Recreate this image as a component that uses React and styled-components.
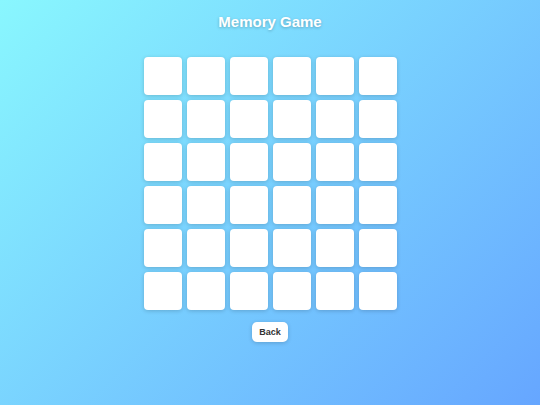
import React from "react";
import styled, { createGlobalStyle } from "styled-components";

const Global = createGlobalStyle`
  html, body { margin: 0; padding: 0; }
  body {
    font-family: "Liberation Sans", Arial, sans-serif;
    min-height: 405px;
    background: linear-gradient(135deg, #89f7fe 0%, #66a6ff 100%);
  }
`;

const Page = styled.div`
  width: 540px;
  height: 405px;
  display: flex;
  flex-direction: column;
  align-items: center;
  box-sizing: border-box;
  padding-top: 13px;
`;

const Title = styled.h1`
  margin: 0;
  font-size: 15px;
  line-height: 17px;
  font-weight: bold;
  color: #fff;
  text-shadow: 0 1px 3px rgba(0, 0, 0, 0.25);
`;

const Board = styled.div`
  margin-top: 27px;
  display: grid;
  grid-template-columns: repeat(6, 38px);
  grid-auto-rows: 38px;
  gap: 5px;
`;

const Card = styled.div`
  background: #fff;
  border-radius: 4px;
  box-shadow: 0 1px 4px rgba(0, 0, 0, 0.18);
`;

const BackButton = styled.button`
  margin-top: 12px;
  width: 36px;
  height: 20px;
  padding: 0;
  border: none;
  border-radius: 5px;
  background: #fff;
  color: #333;
  font-family: "Liberation Sans", Arial, sans-serif;
  font-size: 9px;
  font-weight: bold;
  box-shadow: 0 1px 4px rgba(0, 0, 0, 0.18);
  cursor: pointer;
`;

export default function App() {
  return (
    <>
      <Global />
      <Page>
        <Title>Memory Game</Title>
        <Board>
          {Array.from({ length: 36 }).map((_, i) => (
            <Card key={i} />
          ))}
        </Board>
        <BackButton>Back</BackButton>
      </Page>
    </>
  );
}
